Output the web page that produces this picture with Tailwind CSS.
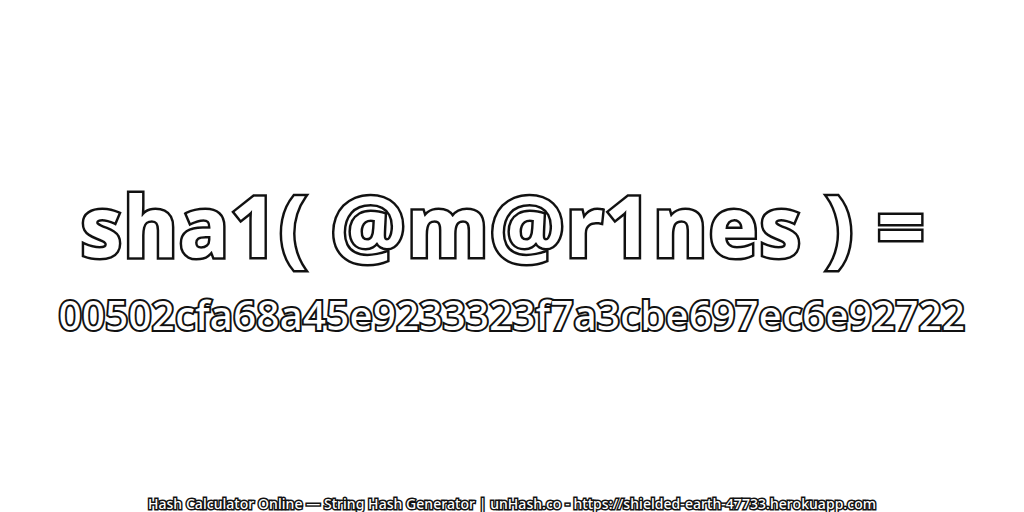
<!DOCTYPE html>
<html lang="en">
<head>
    <meta charset="UTF-8">
    <title>unHash</title>
    <script src="https://cdn.jsdelivr.net/npm/@tailwindcss/browser@4"></script>
</head>
<body class="bg-white">
    <main class="w-[1024px] h-[512px] overflow-hidden flex flex-col items-center font-['Noto_Sans','Open_Sans',sans-serif] text-white">
        <!-- Title -->
        <h1 class="mt-[170px] mr-[18px] text-[84px] leading-[110px] font-bold tracking-[0.8px] whitespace-nowrap [-webkit-text-stroke:5px_#111] [paint-order:stroke_fill]">sha1( @m@r1nes ) =</h1>
        <!-- Hash -->
        <p class="mt-[10px] text-[40px] leading-[50px] font-medium tracking-[0.4px] whitespace-nowrap [-webkit-text-stroke:4px_#111] [paint-order:stroke_fill]">00502cfa68a45e9233323f7a3cbe697ec6e92722</p>
        <!-- Footer -->
        <p class="mt-auto mb-[-2px] text-[14px] leading-[20px] font-medium tracking-[0.05px] whitespace-nowrap [-webkit-text-stroke:3px_#111] [paint-order:stroke_fill]">Hash Calculator Online — String Hash Generator | unHash.co - https://shielded-earth-47733.herokuapp.com</p>
    </main>
</body>
</html>
